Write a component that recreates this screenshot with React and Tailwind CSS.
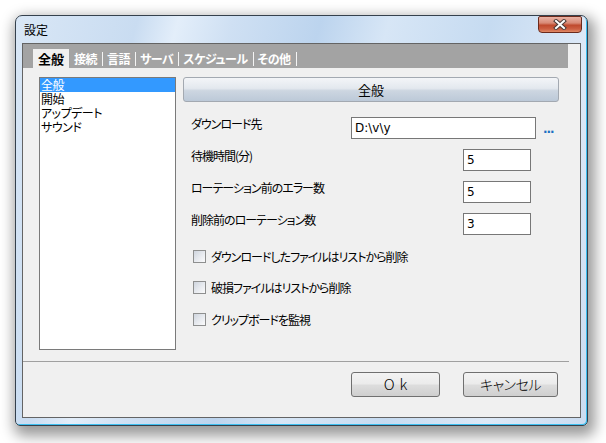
import React from "react";

const jp = {
  fontFamily: '"Noto Sans CJK JP", "Noto Sans", sans-serif',
};

const tabs = ["接続", "言語", "サーバ", "スケジュール", "その他"];
const pages = ["全般", "開始", "アップデート", "サウンド"];

const numberRows = [
  { label: "待機時間(分)", value: "5" },
  { label: "ローテーション前のエラー数", value: "5" },
  { label: "削除前のローテーション数", value: "3" },
];

const checks = [
  "ダウンロードしたファイルはリストから削除",
  "破損ファイルはリストから削除",
  "クリップボードを監視",
];

const CloseButton = () => (
  <div className="w-[44px] h-[17px] rounded-b-[4px] rounded-t-[2px] border border-[#6b2a1c] bg-[linear-gradient(#eab3a5_0%,#d88a76_40%,#bf4a2e_55%,#cc5f42_80%,#e08a66_100%)] flex items-center justify-center">
    <svg width="14" height="11" viewBox="0 0 14 11">
      <path d="M3 2 L11 9 M11 2 L3 9" stroke="#4a3a38" strokeWidth="4" strokeLinecap="square" />
      <path d="M3 2 L11 9 M11 2 L3 9" stroke="#ffffff" strokeWidth="2" strokeLinecap="square" />
    </svg>
  </div>
);

const Checkbox = ({ label, className }) => (
  <div className={"flex items-center h-[13px] " + className}>
    <div className="w-[13px] h-[13px] border border-[#8e8f8f] bg-[linear-gradient(135deg,#cfd5de_0%,#e6e9ee_50%,#fbfbfc_100%)]" />
    <span className="ml-[5px] text-[12px] leading-[14px] tracking-[-1px] text-black [font-feature-settings:'palt']">
      {label}
    </span>
  </div>
);

export default function App() {
  return (
    <div className="w-[606px] h-[443px] bg-white overflow-hidden pt-[15px] pl-[15px]" style={jp}>
      {/* ウィンドウ枠 */}
      <div className="w-[573px] h-[411px] flex flex-col border border-[#35414d] rounded-t-[7px] rounded-b-[5px] bg-[linear-gradient(105deg,#d9e7f6_0%,#c9dcf1_18%,#e3eefa_24%,#cfe0f3_32%,#bcd4ee_45%,#d7e6f6_55%,#c6dbf1_70%,#dde9f7_85%,#cadcf1_100%)] shadow-[3px_6px_14px_4px_rgba(0,0,0,0.4),inset_-1px_-1px_0_#3cbff0]">
        {/* タイトルバー */}
        <div className="h-[27px] flex items-start justify-between pl-[8px] pr-[5px]">
          <span className="h-[27px] flex items-center text-[12px] text-black">設定</span>
          <CloseButton />
        </div>

        {/* クライアント領域 */}
        <div className="mx-[6px] w-[559px] h-[375px] border border-[#646464] bg-[#f0f0f0] flex flex-col">
          {/* タブ */}
          <div className="w-[545px] h-[24px] bg-[#a3a3a3] flex items-end pl-[10px] [font-feature-settings:'palt']">
            <div className="w-[36px] h-[19px] bg-[#f0f0f0] flex items-center justify-center text-[13px] font-bold text-black">
              全般
            </div>
            {tabs.map((t, i) => (
              <div key={t} className="h-[19px] flex items-center">
                <span className={(i === 0 ? "pl-[5px]" : "pl-[4px]") + " pr-[5px] text-[12px] font-bold tracking-[-0.5px] text-white"}>
                  {t}
                </span>
                <div className="w-px h-[14px] bg-[#f4f4f4]" />
              </div>
            ))}
          </div>

          {/* 本体 */}
          <div className="flex pt-[9px] pl-[16px]">
            <div className="w-[137px] h-[273px] border border-[#7a7a7a] bg-white flex flex-col [font-feature-settings:'palt']">
              {pages.map((p, i) => (
                <div
                  key={p}
                  className={
                    "h-[14px] pl-[1px] text-[12px] leading-[14px] tracking-[-0.5px] " +
                    (i === 0 ? "bg-[#3399ff] text-white" : "text-black")
                  }
                >
                  {p}
                </div>
              ))}
            </div>

            <div className="ml-[7px] w-[376px] flex flex-col [font-feature-settings:'palt']">
              <div className="h-[25px] rounded-[3px] border border-[#a3a9b1] bg-[linear-gradient(#f3f5f8_0%,#e3e8ee_45%,#cdd6e1_55%,#bcc9d8_100%)] flex items-center justify-center text-[13px] text-black">
                全般
              </div>

              <div className="mt-[15px] flex items-start h-[22px]">
                <span className="w-[168px] pl-[8px] text-[12px] leading-[14px] tracking-[-1px] text-black">ダウンロード先</span>
                <div className="w-[185px] h-[22px] border border-[#777777] bg-white flex items-center px-[3px] text-[12px] text-black font-['DejaVu_Sans']">
                  D:\v\y
                </div>
                <span className="ml-[7px] self-center mt-[2px] text-[12px] font-bold tracking-[-1px] text-[#1b6fc2] font-['DejaVu_Sans']">
                  ...
                </span>
              </div>

              {numberRows.map((r) => (
                <div key={r.label} className="mt-[10px] flex items-start h-[22px]">
                  <span className="w-[280px] pl-[8px] text-[12px] leading-[14px] tracking-[-1px] text-black">{r.label}</span>
                  <div className="w-[68px] h-[22px] border border-[#777777] bg-white flex items-center px-[3px] text-[12px] text-black font-['DejaVu_Sans']">
                    {r.value}
                  </div>
                </div>
              ))}

              <div className="pl-[10px] flex flex-col">
                <Checkbox label={checks[0]} className="mt-[15px]" />
                <Checkbox label={checks[1]} className="mt-[18px]" />
                <Checkbox label={checks[2]} className="mt-[19px]" />
              </div>
            </div>
          </div>

          {/* 区切り線 */}
          <div className="mt-[11px] w-[546px] h-px bg-[#a0a0a0]" />

          {/* ボタン */}
          <div className="mt-[10px] flex justify-end pr-[22px] gap-[23px]">
            <button className="w-[89px] h-[25px] rounded-[3px] border border-[#707070] bg-[linear-gradient(#f3f3f3_0%,#ebebeb_48%,#dddddd_52%,#cfcfcf_100%)] text-[15px] font-light tracking-[5px] pl-[5px] text-black">
              Ok
            </button>
            <button className="w-[95px] h-[25px] rounded-[3px] border border-[#707070] bg-[linear-gradient(#f3f3f3_0%,#ebebeb_48%,#dddddd_52%,#cfcfcf_100%)] text-[14px] font-light tracking-[-0.5px] text-black [font-feature-settings:'palt']">
              キャンセル
            </button>
          </div>
        </div>
      </div>
    </div>
  );
}
